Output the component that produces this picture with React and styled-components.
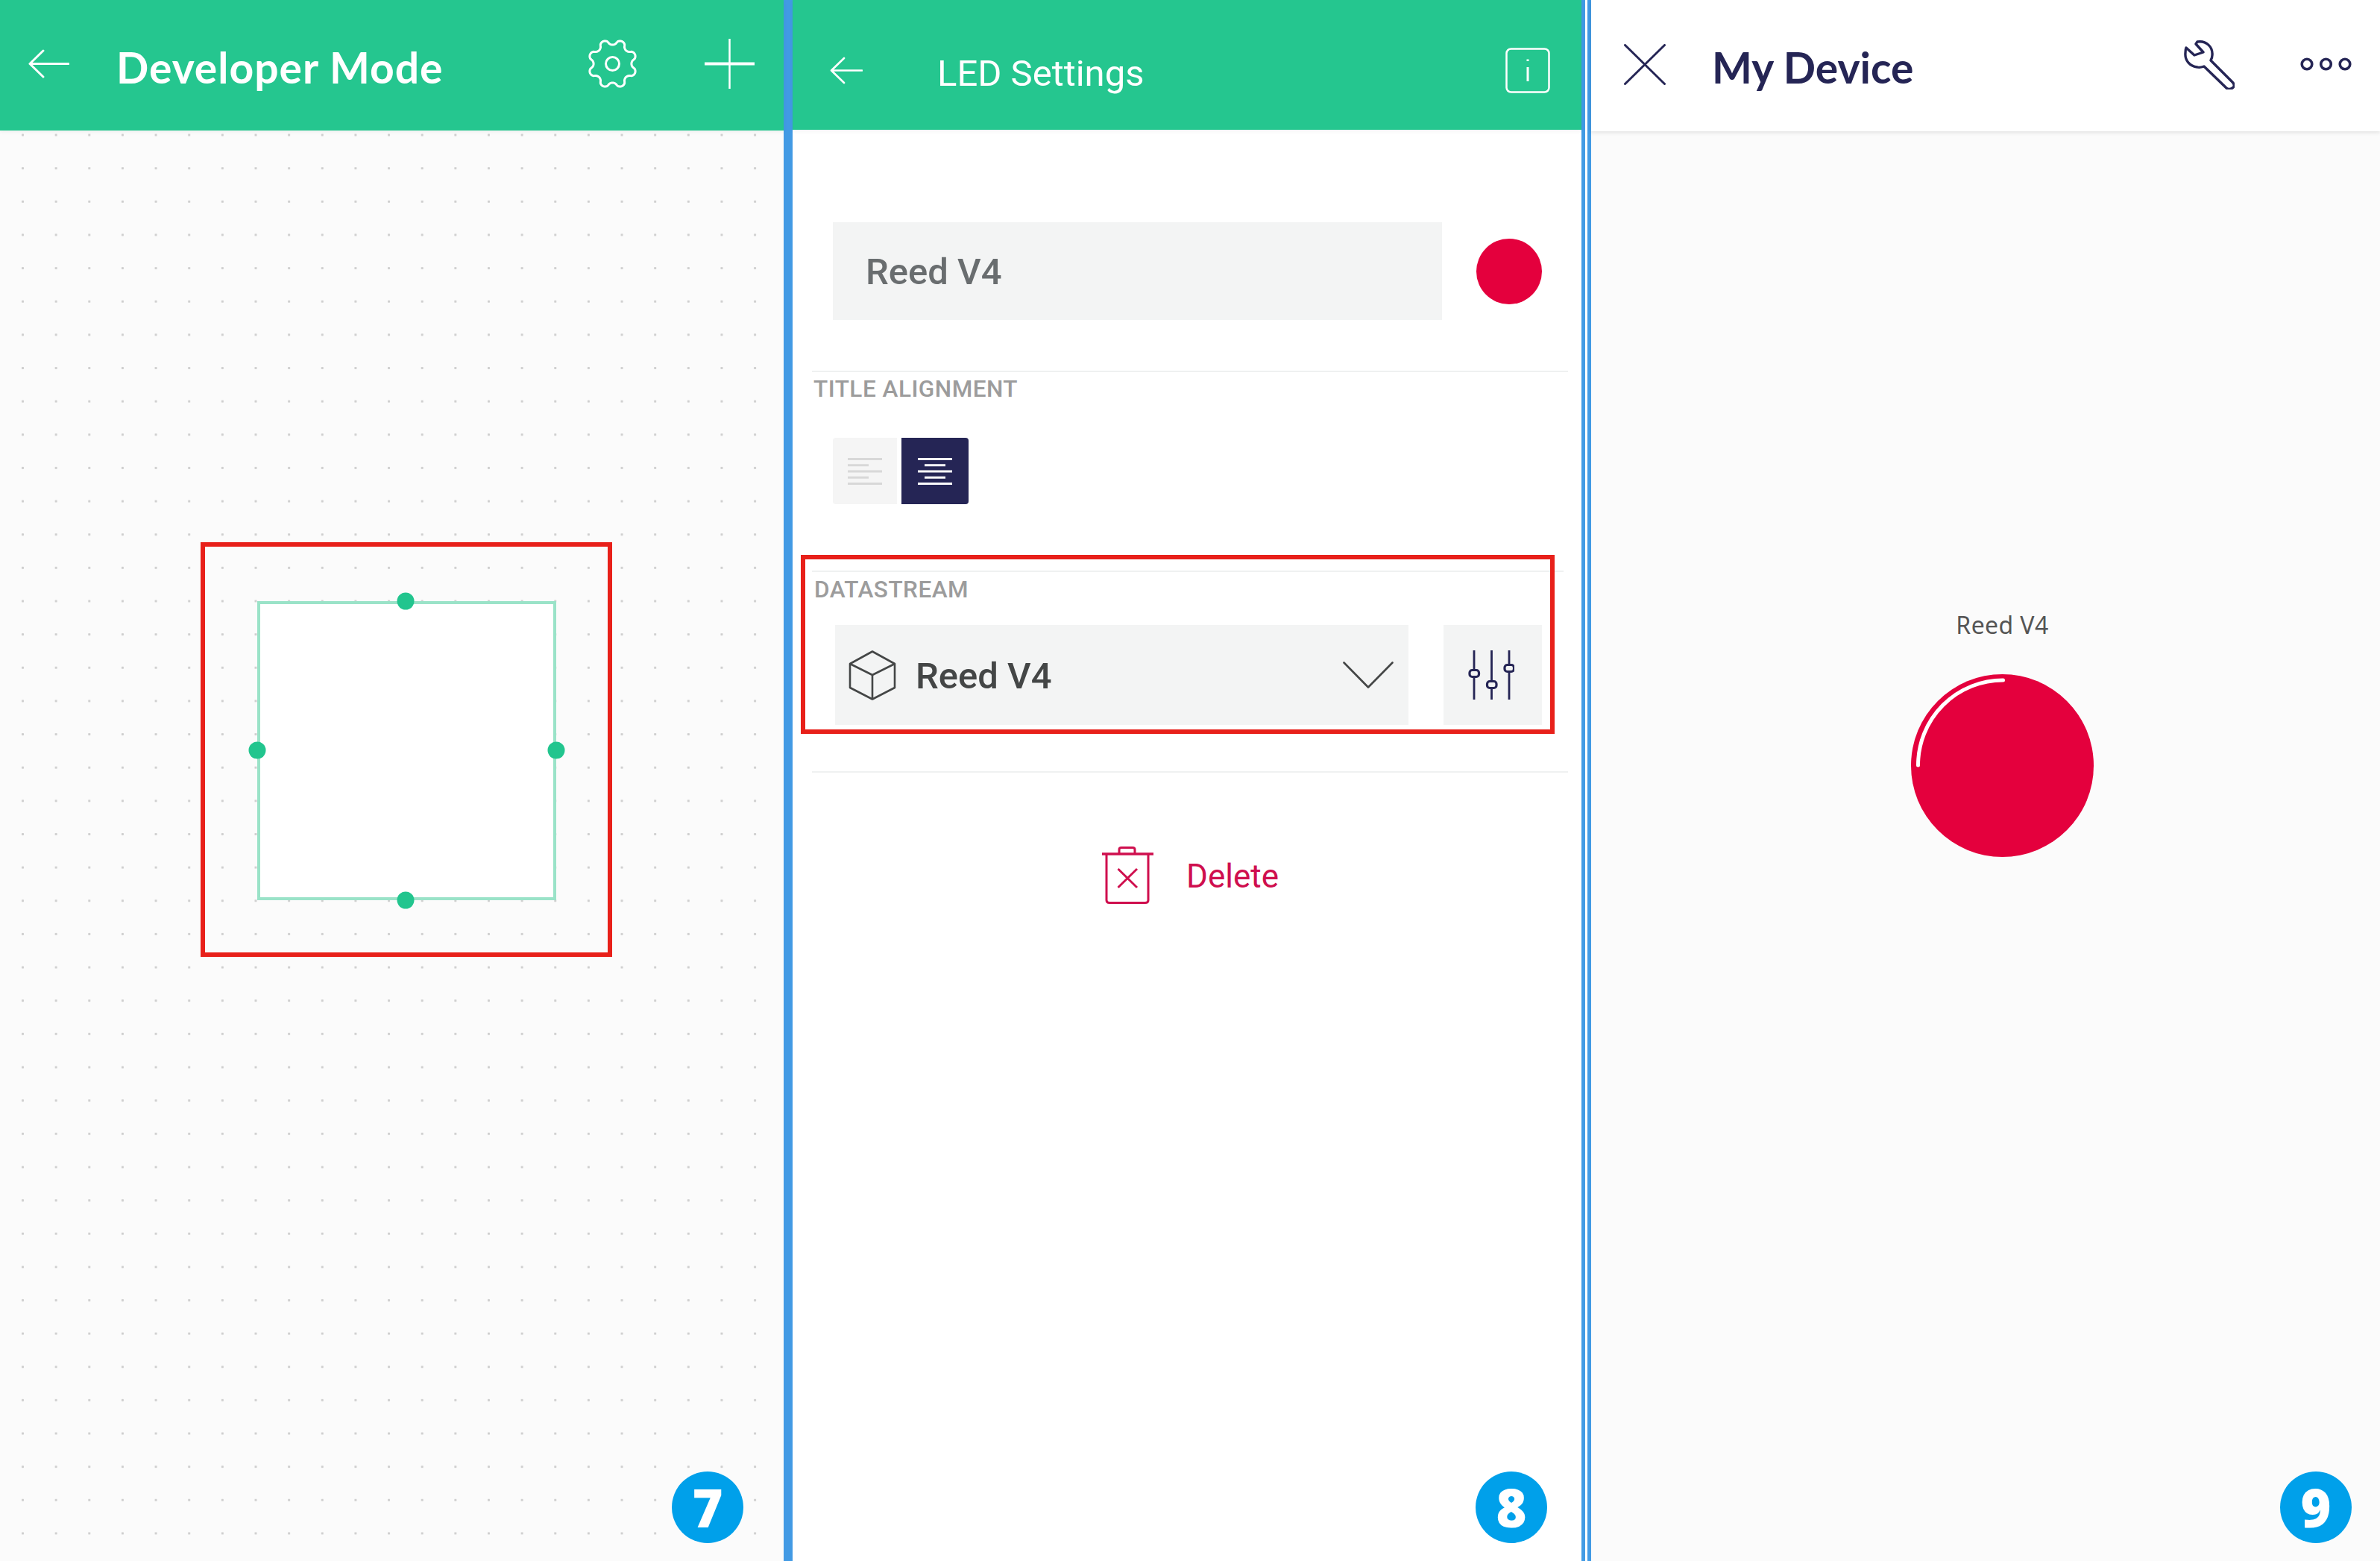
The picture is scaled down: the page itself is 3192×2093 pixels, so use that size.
import React from "react";
import styled, { createGlobalStyle } from "styled-components";

const Global = createGlobalStyle`
  html, body { margin: 0; padding: 0; background: #fff; }
  body { font-family: Roboto, "Liberation Sans", sans-serif; }
`;

const Page = styled.div`
  display: flex;
  width: 3192px;
  height: 2093px;
  overflow: hidden;
`;
const Panel = styled.section`
  position: relative;
  display: flex;
  flex-direction: column;
  flex: none;
  width: ${(p) => p.$width}px;
  background: ${(p) => p.$bg || "#fff"};
`;
const Rule = styled.div`
  flex: none;
  width: ${(p) => p.$width}px;
  background: #429ae4;
`;
const DoubleRule = styled.div`
  flex: none;
  display: flex;
  gap: 3px;
`;

const Header = styled.header`
  flex: none;
  box-sizing: border-box;
  height: ${(p) => p.$height}px;
  display: flex;
  align-items: center;
  background: ${(p) => (p.$light ? "#fff" : "#25c68f")};
  box-shadow: 0 2px 5px rgba(0, 0, 0, ${(p) => (p.$light ? 0.1 : 0.05)});
  position: relative;
  z-index: 1;
  padding: ${(p) => p.$pad};
`;
const BrandTitle = styled.h1`
  margin: ${(p) => p.$margin};
  font: 700 ${(p) => p.$size}px/1 Lato, "Open Sans", sans-serif;
  color: ${(p) => p.$color};
  letter-spacing: ${(p) => p.$track || 0}px;
`;
const PlainTitle = styled.h1`
  margin: 9px 0 0 100px;
  font: 400 49px/1 Roboto, sans-serif;
  color: #fff;
`;
const Spacer = styled.div`
  flex: 1;
`;
const Icon = styled.svg`
  flex: none;
  display: block;
  fill: none;
  stroke: ${(p) => p.$stroke || "currentColor"};
  margin: ${(p) => p.$margin || 0};
`;

const Canvas = styled.main`
  flex: 1;
  background-color: #fbfbfb;
  background-image: radial-gradient(circle, #cfcfcf 1.3px, transparent 2px);
  background-size: 44.65px 44.65px;
  background-position: 8.2px -16.3px;
  padding: 552px 0 0 269px;
`;
const Annotation = styled.div`
  box-sizing: border-box;
  border: 6px solid #e8201a;
`;
const CanvasMark = styled(Annotation)`
  width: 552px;
  height: 556px;
  display: flex;
  align-items: center;
  justify-content: center;
`;
const Selection = styled.div`
  position: relative;
  box-sizing: border-box;
  width: 401px;
  height: 401px;
  margin-top: 3px;
  background: #fff;
  border: 4px solid #9ae3c8;
`;
const Handle = styled.span`
  position: absolute;
  width: 23px;
  height: 23px;
  border-radius: 50%;
  background: #22c58e;
  left: ${(p) => p.$x};
  top: ${(p) => p.$y};
  transform: translate(-50%, -50%);
`;

const Settings = styled.main`
  position: relative;
  z-index: 0;
  flex: 1;
  padding-top: 124px;
  background: #fff;
`;
const FieldRow = styled.div`
  display: flex;
  align-items: center;
  gap: 46px;
  margin-left: 54px;
`;
const NameField = styled.div`
  box-sizing: border-box;
  width: 817px;
  height: 131px;
  padding: 2px 0 0 44px;
  display: flex;
  align-items: center;
  background: #f3f4f4;
  font: 500 49px/1 Roboto, sans-serif;
  color: #696d6f;
`;
const Swatch = styled.div`
  width: 88px;
  height: 88px;
  border-radius: 50%;
  background: #e4003d;
`;
const Divider = styled.div`
  height: 2px;
  background: #eff1f1;
  margin: ${(p) => p.$margin};
`;
const BehindDivider = styled(Divider)`
  position: relative;
  z-index: -1;
`;
const SectionLabel = styled.div`
  font: 500 31.5px/36px Roboto, sans-serif;
  color: #9c9c9c;
  letter-spacing: 0.5px;
  margin: ${(p) => p.$margin};
`;
const AlignGroup = styled.div`
  display: flex;
  gap: 6px;
  margin: 47px 0 0 54px;
`;
const AlignButton = styled.div`
  width: ${(p) => p.$width}px;
  height: 89px;
  display: flex;
  align-items: center;
  justify-content: center;
  border-radius: ${(p) => (p.$active ? "0 4px 4px 0" : "4px 0 0 4px")};
  background: ${(p) => (p.$active ? "#252555" : "#f5f5f5")};
`;
const DatastreamMark = styled(Annotation)`
  width: 1011px;
  height: 240px;
  margin: 68px 0 0 11px;
`;
const SelectRow = styled.div`
  display: flex;
  gap: 47px;
  margin: 29px 0 0 40px;
`;
const Select = styled.div`
  box-sizing: border-box;
  width: 769px;
  height: 134px;
  display: flex;
  align-items: center;
  padding: 0 20px 0 18px;
  background: #f3f4f4;
  font: 500 49px/1 Roboto, sans-serif;
  color: #444646;
`;
const SelectText = styled.span`
  flex: 1;
  margin: 3px 0 0 26px;
`;
const TuneButton = styled.div`
  width: 132px;
  height: 134px;
  display: flex;
  align-items: center;
  justify-content: center;
  background: #f3f4f4;
`;
const DeleteRow = styled.div`
  display: flex;
  align-items: center;
  justify-content: center;
  gap: 44px;
  margin: 99px 0 0 9px;
  font: 400 44px/1 Roboto, sans-serif;
  color: #cf0f4e;
`;
const DeleteText = styled.span`
  margin-top: 2px;
`;

const Device = styled.main`
  flex: 1;
  display: flex;
  flex-direction: column;
  align-items: center;
  padding: 640px 0 0 45px;
  background: #fbfbfb;
`;
const WidgetLabel = styled.div`
  font: 400 32px/44px "Noto Sans", "Open Sans", sans-serif;
  letter-spacing: 0.4px;
  color: #555;
`;
const Led = styled.div`
  position: relative;
  width: 245px;
  height: 245px;
  margin-top: 44px;
  border-radius: 50%;
  background: #e4003d;
`;
const LedShine = styled.svg`
  position: absolute;
  inset: 0;
  fill: none;
  stroke: #fff;
`;
const StepBadge = styled.div`
  position: absolute;
  right: ${(p) => p.$right}px;
  bottom: 24px;
  width: 96px;
  height: 96px;
  border-radius: 50%;
  background: #00a0ea;
  display: flex;
  align-items: center;
  justify-content: center;
  font: 800 70px/1 "Open Sans", sans-serif;
  color: #fff;
  z-index: 2;
`;

const gearPath = (() => {
  const pts = [];
  const n = 192;
  for (let i = 0; i < n; i++) {
    const t = (i / n) * Math.PI * 2;
    const wave = -Math.cos(8 * t);
    const r = 29 + 3.6 * Math.sign(wave) * Math.pow(Math.abs(wave), 0.6);
    pts.push(`${(33.5 + r * Math.sin(t)).toFixed(2)} ${(33.5 - r * Math.cos(t)).toFixed(2)}`);
  }
  return `M${pts.join("L")}Z`;
})();

const Arrow = ({ w, h, margin, sw = 3 }) => (
  <Icon width={w} height={h} viewBox={`0 0 ${w} ${h}`} $stroke="#fff" $margin={margin} strokeWidth={sw} strokeLinecap="round" strokeLinejoin="round">
    <path d={`M${w - 1} ${h / 2}H2M${h * 0.46 + 2} 2L2 ${h / 2}L${h * 0.46 + 2} ${h - 2}`} />
  </Icon>
);

const Gear = () => (
  <Icon width="67" height="67" viewBox="0 0 67 67" $stroke="#fff" strokeWidth="3" strokeLinejoin="round">
    <path d={gearPath} />
    <circle cx="33.5" cy="33.5" r="9" />
  </Icon>
);

const Plus = () => (
  <Icon width="67" height="67" viewBox="0 0 67 67" $stroke="#fff" $margin="0 0 0 90px">
    <path d="M33.5 0V67" strokeWidth="2.5" />
    <path d="M0 33.5H67" strokeWidth="4" />
  </Icon>
);

const InfoBox = () => (
  <Icon width="60" height="61" viewBox="0 0 60 61" $stroke="#fff" strokeWidth="2.5">
    <rect x="1.5" y="1.5" width="57" height="58" rx="6" />
    <path d="M30 26V45" strokeWidth="3" />
    <path d="M30 15.5V18" strokeWidth="3" />
  </Icon>
);

const Lines = ({ color, align }) => {
  const rows = [46, 28, 46, 28, 46];
  return (
    <Icon width="46" height="36" viewBox="0 0 46 36" $stroke={color} strokeWidth="3">
      {rows.map((w, i) => {
        const x = align === "center" ? (46 - w) / 2 : 0;
        return <path key={i} d={`M${x} ${1.5 + i * 8.25}H${x + w}`} />;
      })}
    </Icon>
  );
};

const Cube = () => (
  <Icon width="64" height="67" viewBox="0 0 64 67" $stroke="#444646" strokeWidth="2.6" strokeLinejoin="round">
    <path d="M32 1.5L62 18V50L32 65.5L2 50V18Z" />
    <path d="M2 18L32 33L62 18M32 33V65.5" />
  </Icon>
);

const Chevron = () => (
  <Icon width="68" height="36" viewBox="0 0 68 36" $stroke="#444646" strokeWidth="2.6" strokeLinecap="round" strokeLinejoin="round">
    <path d="M1.5 1.5L34 34.5L66.5 1.5" />
  </Icon>
);

const Tune = () => (
  <Icon width="62" height="66" viewBox="0 0 62 66" $stroke="#252555" strokeWidth="2.8" $margin="0 4px 0 0">
    <path d="M8 0V26M8 36V66M31.5 0V41M31.5 51V66M55 0V19M55 29V66" />
    <rect x="2" y="26.5" width="12.5" height="9" rx="3.5" strokeWidth="3.2" />
    <rect x="25.5" y="41.5" width="12.5" height="9" rx="3.5" strokeWidth="3.2" />
    <rect x="49" y="19.5" width="12.5" height="9" rx="3.5" strokeWidth="3.2" />
  </Icon>
);

const Trash = () => (
  <Icon width="69" height="77" viewBox="0 0 69 77" $stroke="#cf0f4e" strokeWidth="3" strokeLinejoin="round">
    <path d="M0 10H69" strokeWidth="3.6" />
    <path d="M23 9V4Q23 1.5 26 1.5H41Q44 1.5 44 4V9" />
    <path d="M6 10V72Q6 75.5 10 75.5H58Q62 75.5 62 72V10" />
    <path d="M21.5 30L47 55M47 30L21.5 55" />
  </Icon>
);

const Close = () => (
  <Icon width="56" height="55" viewBox="0 0 56 55" $stroke="#252555" strokeWidth="3" strokeLinecap="round">
    <path d="M1.5 1.5L54.5 53.5M54.5 1.5L1.5 53.5" />
  </Icon>
);

const Wrench = () => (
  <Icon width="68" height="67" viewBox="0 0 68 67" $stroke="#252555" strokeWidth="3.4" strokeLinejoin="round">
    <path d="M18 3C30 1 39 10 38 21C38 24 37 26 36 28L65 57C68 60 68 63 65 65C62 67 59 67 57 65L27 36C24 37 21 38 18 37C8 36 1 28 2 18C2 15 2 13 3 11L14 21L26 17L16 6Z" />
  </Icon>
);

const More = () => (
  <Icon width="69" height="18" viewBox="0 0 69 18" $stroke="#252555" strokeWidth="3.6" $margin="0 0 0 88px">
    <circle cx="9" cy="9" r="6.8" />
    <circle cx="34.5" cy="9" r="6.8" />
    <circle cx="60" cy="9" r="6.8" />
  </Icon>
);

export default function App() {
  return (
    <Page>
      <Global />
      <Panel $width={1051} $bg="#fbfbfb">
        <Header $height={175} $pad="0 39px 4px 38px">
          <Arrow w={55} h={39} />
          <BrandTitle $margin="9px 0 0 63px" $size={57} $track={1} $color="#fff">Developer Mode</BrandTitle>
          <Spacer />
          <Gear />
          <Plus />
        </Header>
        <Canvas>
          <CanvasMark>
            <Selection>
              <Handle $x="calc(50% - 1px)" $y="-4px" />
              <Handle $x="-4px" $y="calc(50% - 1px)" />
              <Handle $x="calc(100% + 4px)" $y="calc(50% - 1px)" />
              <Handle $x="calc(50% - 1px)" $y="calc(100% + 4px)" />
            </Selection>
          </CanvasMark>
        </Canvas>
        <StepBadge $right={54}>7</StepBadge>
      </Panel>
      <Rule $width={12} />
      <Panel $width={1058}>
        <Header $height={174} $pad="14px 42px 0 50px">
          <Arrow w={44} h={37} sw={2.6} />
          <PlainTitle>LED Settings</PlainTitle>
          <Spacer />
          <InfoBox />
        </Header>
        <Settings>
          <FieldRow>
            <NameField>Reed V4</NameField>
            <Swatch />
          </FieldRow>
          <Divider $margin="68px 18px 0 26px" />
          <SectionLabel $margin="5px 0 0 28px">TITLE ALIGNMENT</SectionLabel>
          <AlignGroup>
            <AlignButton $width={86}><Lines color="#d8d8d8" /></AlignButton>
            <AlignButton $width={90} $active><Lines color="#fff" align="center" /></AlignButton>
          </AlignGroup>
          <DatastreamMark>
            <BehindDivider $margin="15px -18px 0 9px" />
            <SectionLabel $margin="6px 0 0 12px">DATASTREAM</SectionLabel>
            <SelectRow>
              <Select>
                <Cube />
                <SelectText>Reed V4</SelectText>
                <Chevron />
              </Select>
              <TuneButton><Tune /></TuneButton>
            </SelectRow>
          </DatastreamMark>
          <Divider $margin="50px 18px 0 26px" />
          <DeleteRow>
            <Trash />
            <DeleteText>Delete</DeleteText>
          </DeleteRow>
        </Settings>
        <StepBadge $right={46}>8</StepBadge>
      </Panel>
      <DoubleRule>
        <Rule $width={5} />
        <Rule $width={5} />
      </DoubleRule>
      <Panel $width={1058} $bg="#fbfbfb">
        <Header $height={176} $light $pad="0 38px 4px 44px">
          <Close />
          <BrandTitle $margin="8px 0 0 62px" $size={57} $color="#252555">My Device</BrandTitle>
          <Spacer />
          <Wrench />
          <More />
        </Header>
        <Device>
          <WidgetLabel>Reed V4</WidgetLabel>
          <Led>
            <LedShine width="245" height="245" viewBox="0 0 245 245" strokeWidth="5" strokeLinecap="round">
              <path d="M9.5 122A114 114 0 0 1 123.5 8" />
            </LedShine>
          </Led>
        </Device>
        <StepBadge $right={38}>9</StepBadge>
      </Panel>
    </Page>
  );
}
